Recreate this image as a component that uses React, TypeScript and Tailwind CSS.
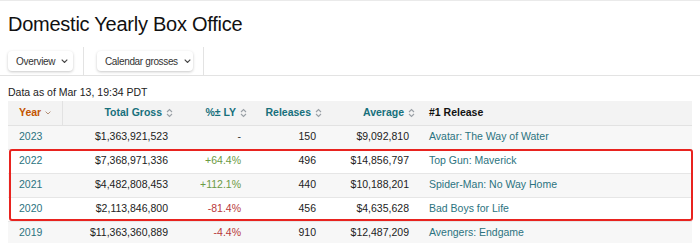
import React from "react";

type Row = {
    year: string;
    gross: string;
    change: string;
    releases: string;
    average: string;
    release: string;
};

const rows: Row[] = [
    {year: "2023", gross: "$1,363,921,523", change: "-", releases: "150", average: "$9,092,810", release: "Avatar: The Way of Water"},
    {year: "2022", gross: "$7,368,971,336", change: "+64.4%", releases: "496", average: "$14,856,797", release: "Top Gun: Maverick"},
    {year: "2021", gross: "$4,482,808,453", change: "+112.1%", releases: "440", average: "$10,188,201", release: "Spider-Man: No Way Home"},
    {year: "2020", gross: "$2,113,846,800", change: "-81.4%", releases: "456", average: "$4,635,628", release: "Bad Boys for Life"},
    {year: "2019", gross: "$11,363,360,889", change: "-4.4%", releases: "910", average: "$12,487,209", release: "Avengers: Endgame"},
];

function SortIcon() {
    return (
        <svg width="7" height="10" viewBox="0 0 7 10" className="ml-[4px] inline-block">
            <path d="M1 4 L3.5 1.5 L6 4 M1 6 L3.5 8.5 L6 6" fill="none" stroke="#9aa0a6" strokeWidth="1.1"/>
        </svg>
    );
}

function Chevron({color = "#444", size = 8}: { color?: string; size?: number }) {
    return (
        <svg width={size} height={size * 0.6} viewBox="0 0 10 6" className="inline-block">
            <path d="M1 1 L5 5 L9 1" fill="none" stroke={color} strokeWidth="1.6"/>
        </svg>
    );
}

function changeColor(v: string) {
    if (v.startsWith("+")) return "text-[#6b9a44]";
    if (v.startsWith("-") && v.length > 1) return "text-[#b8393b]";
    return "text-[#333]";
}

export default function App() {
    return (
        <div className="w-[700px] h-[243px] overflow-hidden bg-white border-t border-[#eaeaea] font-['Liberation_Sans',Arial,sans-serif] text-[#222]">
            {/* title */}
            <h1 className="pl-[8px] pt-[11px] text-[20px] leading-[24px] tracking-[-0.25px] text-[#111]">
                Domestic Yearly Box Office
            </h1>

            {/* filter bar */}
            <div className="mt-[11px] flex h-[29px] items-center border-b border-[#e3e3e3]">
                <div className="flex h-full items-center pl-[8px] pr-[10px] border-r border-[#e3e3e3]">
                    <button className="flex h-[20px] w-[65px] items-center gap-[6px] rounded-[4px] bg-white pl-[8px] text-[10px] tracking-[-0.3px] text-[#333] shadow-[0_1px_3px_rgba(0,0,0,0.22)]">
                        Overview <Chevron size={7}/>
                    </button>
                </div>
                <div className="flex h-full items-center pl-[13px] pr-[10px] border-r border-[#e3e3e3]">
                    <button className="flex h-[20px] w-[96px] items-center gap-[6px] rounded-[4px] bg-white pl-[8px] text-[10px] tracking-[-0.35px] text-[#333] shadow-[0_1px_3px_rgba(0,0,0,0.22)]">
                        Calendar grosses <Chevron size={7}/>
                    </button>
                </div>
            </div>

            <p className="pl-[8px] pt-[9px] text-[10.5px] leading-[14px] text-[#222]">Data as of Mar 13, 19:34 PDT</p>

            {/* table */}
            <div className="relative ml-[8px] mt-[2px] w-[684px]">
                <table className="w-full border-collapse text-[10.5px]">
                    <colgroup>
                        <col className="w-[54px]"/>
                        <col className="w-[118px]"/>
                        <col className="w-[73px]"/>
                        <col className="w-[75px]"/>
                        <col className="w-[93px]"/>
                        <col/>
                    </colgroup>
                    <thead>
                    <tr className="h-[24px] bg-[#f3f3f3] border-b border-[#e2e2e2] font-bold">
                        <th className="border-r border-[#e2e2e2] pl-[11px] text-left font-bold text-[#c45500]">
                            <span className="inline-flex items-center gap-[4px]">Year <Chevron color="#b08a70" size={6}/></span>
                        </th>
                        <th className="pr-[7px] text-right text-[#17707c]"><span className="inline-flex items-center">Total Gross<SortIcon/></span></th>
                        <th className="pr-[6px] text-right text-[#17707c]"><span className="inline-flex items-center">%± LY<SortIcon/></span></th>
                        <th className="pr-[6px] text-right text-[#17707c]"><span className="inline-flex items-center">Releases<SortIcon/></span></th>
                        <th className="pr-[6px] text-right text-[#17707c]"><span className="inline-flex items-center">Average<SortIcon/></span></th>
                        <th className="pl-[8px] text-left text-[#111]">#1 Release</th>
                    </tr>
                    </thead>
                    <tbody>
                    {rows.map((r, i) => (
                        <tr key={r.year} className={`h-[24px] border-b border-[#e6e6e6] ${i % 2 === 0 ? "bg-[#f7f7f7]" : "bg-white"}`}>
                            <td className="pl-[11px] text-[#2b7380]">{r.year}</td>
                            <td className="pr-[12px] text-right">{r.gross}</td>
                            <td className={`pr-[12px] text-right ${changeColor(r.change)}`}>{r.change}</td>
                            <td className="pr-[12px] text-right">{r.releases}</td>
                            <td className="pr-[12px] text-right">{r.average}</td>
                            <td className="pl-[8px] text-[#2b7380]">{r.release}</td>
                        </tr>
                    ))}
                    </tbody>
                </table>

                {/* highlight annotation */}
                <div className="pointer-events-none absolute left-[1px] top-[48px] h-[72px] w-[684px] rounded-[3px] border-2 border-[#e8231f]"/>
            </div>
        </div>
    );
}
